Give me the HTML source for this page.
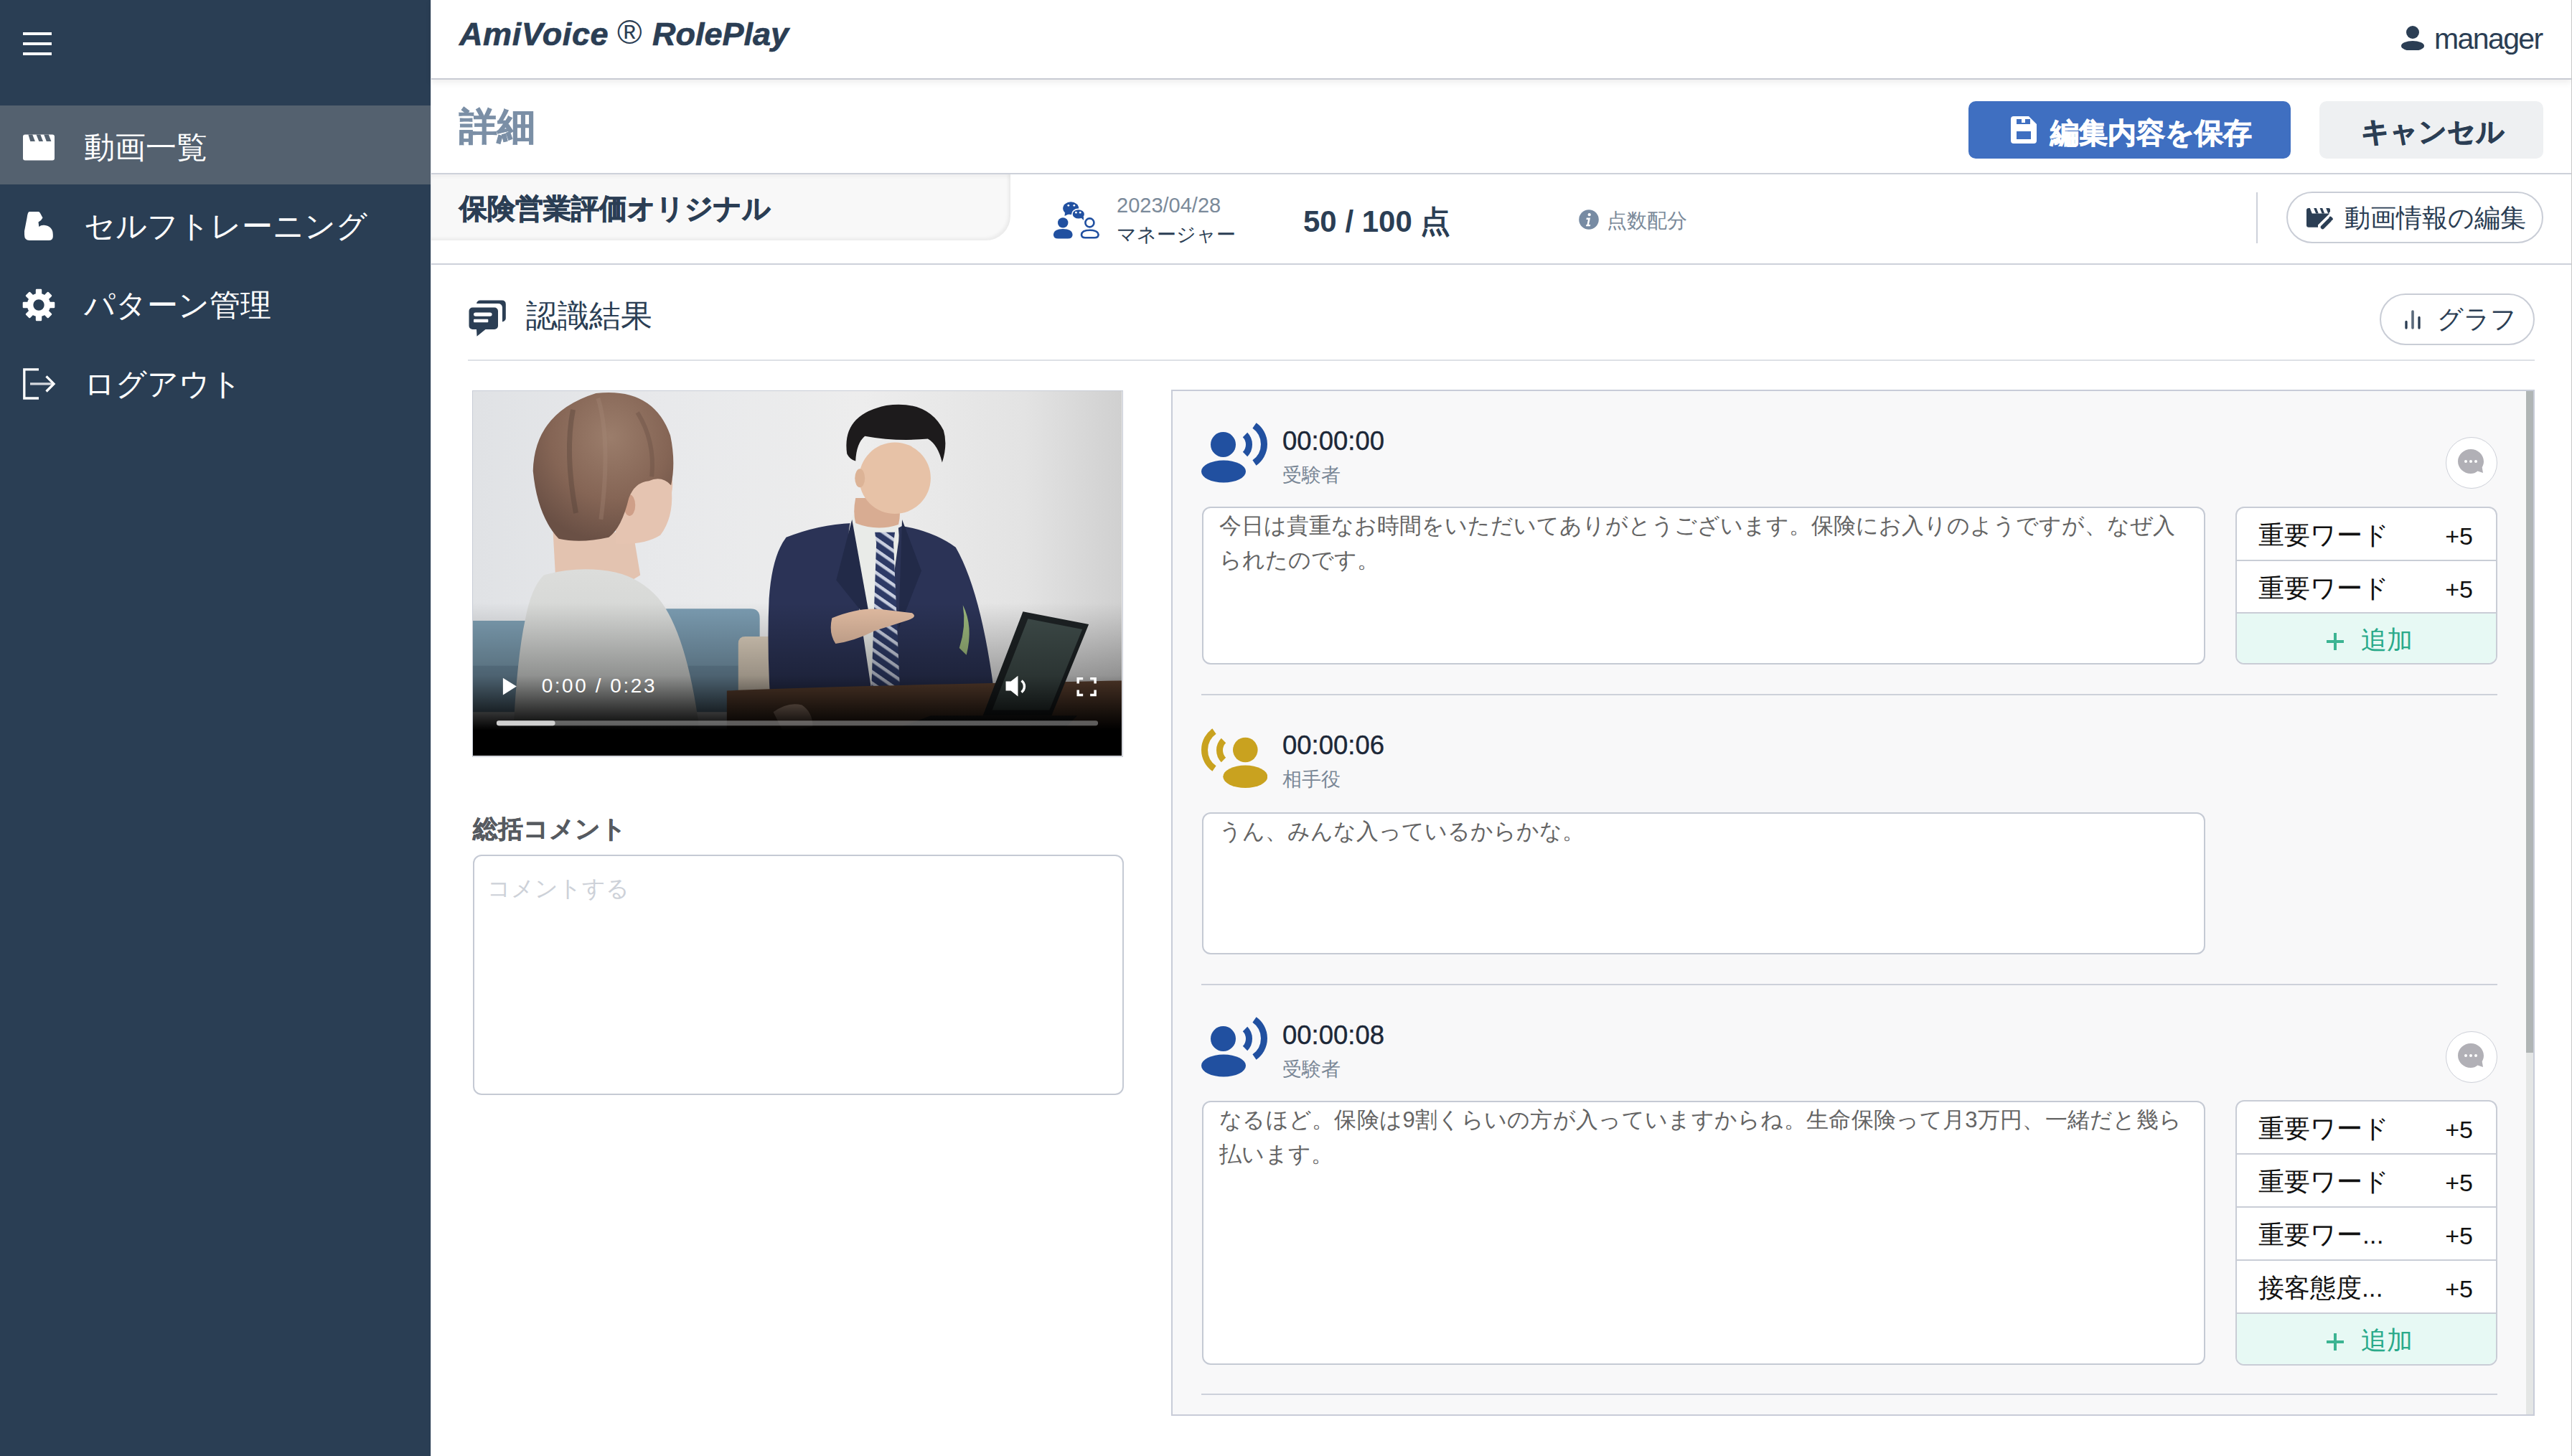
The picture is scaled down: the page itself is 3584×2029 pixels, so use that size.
<!DOCTYPE html>
<html lang="ja">
<head>
<meta charset="utf-8">
<style>
*{box-sizing:border-box;margin:0;padding:0}
html,body{width:3584px;height:2029px;overflow:hidden;background:#fff;font-family:"Liberation Sans",sans-serif;color:#2b3e54}
.a{position:absolute}
.t{position:absolute;white-space:nowrap;line-height:1}
.b{-webkit-text-stroke:0.9px currentColor}
#side{left:0;top:0;width:600px;height:2029px;background:#2a3e54}
.mi{position:absolute;left:0;width:600px;height:110px}
.mi .lbl{position:absolute;left:117px;top:37px;font-size:43px;color:#fff;line-height:1}
.hline{position:absolute;height:2px;background:#cdd1da}
.box{position:absolute;background:#fff;border:2px solid #c5cad4;border-radius:12px}
.kw{position:absolute;background:#fff;border:2px solid #c9cdd6;border-radius:12px;overflow:hidden}
.kw .r{position:relative;height:73.5px;border-bottom:2px solid #c9cdd6}
.kw .r .n{position:absolute;left:30px;top:21px;font-size:35.5px;color:#111;line-height:1}
.kw .r .p{position:absolute;right:32px;top:22px;font-size:34px;color:#111;line-height:1}
.kw3 .r{height:74px}
.kw .add{height:71px;background:#e7f9f4;position:relative}
.kw .add .n{position:absolute;left:125px;top:19px;font-size:36px;color:#2aaa8a;line-height:1}
.ts{position:absolute;font-size:36.5px;color:#1d2838;line-height:1;-webkit-text-stroke:0.4px #1d2838}
.role{position:absolute;font-size:27px;margin-top:2px;color:#7a8796;line-height:1}
.txt{position:absolute;font-size:31px;color:#646464;line-height:48px;white-space:nowrap}
.cbtn{position:absolute;width:72px;height:72px;border-radius:50%;border:1.5px solid #cdd0d8;background:#fff}
</style>
</head>
<body>
<!-- SIDEBAR -->
<div id="side" class="a">
  <!-- hamburger -->
  <div class="a" style="left:32px;top:45px;width:40px;height:4px;background:#fff"></div>
  <div class="a" style="left:32px;top:59px;width:40px;height:4px;background:#fff"></div>
  <div class="a" style="left:32px;top:73px;width:40px;height:4px;background:#fff"></div>

  <div class="mi" style="top:147px;background:#54616f">
    <svg class="a" style="left:32px;top:39.5px" width="44" height="37" viewBox="0 0 44 37"><path fill="#fff" d="M3 0.5h38a3 3 0 0 1 3 3v30a3 3 0 0 1-3 3H3a3 3 0 0 1-3-3v-30a3 3 0 0 1 3-3z"/><g fill="#54616f"><path d="M7.4 0.5h5.8l3.7 9.4h-6.6zM18.5 0.5h5.8l3.7 9.4h-5.7zM29.2 0.5h6.6l3.6 9.4h-6.6z"/></g></svg>
    <div class="lbl">動画一覧</div>
  </div>
  <div class="mi" style="top:257px">
    <svg class="a" style="left:20px;top:28px" width="70" height="60" viewBox="0 0 70 60"><path fill="#fff" d="M21 9.9H33.5Q35 10 36 12L39.5 18.5Q38 22 33.5 24.5L34.3 31Q37 28.5 41.5 28.8Q53.6 30 53.8 42V45Q53.5 50 48 50H21Q14 50 14 42V37L17.5 19Q18.5 10 21 9.9z"/></svg>
    <div class="lbl">セルフトレーニング</div>
  </div>
  <div class="mi" style="top:367px">
    <svg class="a" style="left:20px;top:28px" width="70" height="60" viewBox="0 0 70 60"><g fill="#fff" transform="translate(34 30)"><circle r="16.2"/><rect x="-4.2" y="-22.3" width="8.4" height="44.6" rx="1.2"/><rect x="-4.2" y="-22.3" width="8.4" height="44.6" rx="1.2" transform="rotate(45)"/><rect x="-4.2" y="-22.3" width="8.4" height="44.6" rx="1.2" transform="rotate(90)"/><rect x="-4.2" y="-22.3" width="8.4" height="44.6" rx="1.2" transform="rotate(135)"/><circle r="7.7" fill="#2a3e54"/></g></svg>
    <div class="lbl">パターン管理</div>
  </div>
  <div class="mi" style="top:477px">
    <svg class="a" style="left:20px;top:28px" width="70" height="60" viewBox="0 0 70 60" fill="none" stroke="#fff" stroke-width="3.3"><path d="M34 9.9H13.8V50H34"/><path d="M22 29.9H53.5" stroke="#d5d8de"/><path d="M44.5 19.4L55 29.9L44.5 40.5"/></svg>
    <div class="lbl">ログアウト</div>
  </div>
</div>

<!-- HEADER -->
<div class="a" style="left:600px;top:0;width:2984px;height:111px;background:#fff;border-bottom:2px solid #c8cbd3;box-shadow:0 4px 9px rgba(0,0,0,0.07)"></div>
<div class="t" id="lg1" style="left:640px;top:25px;font-size:45px;letter-spacing:0.6px;-webkit-text-stroke:0.7px #2b3e54;font-weight:bold;font-style:italic;color:#2b3e54">AmiVoice</div>
<div class="t" id="lg2" style="left:860px;top:21px;font-size:47px;color:#2b3e54">®</div>
<div class="t" id="lg3" style="left:909px;top:25px;-webkit-text-stroke:0.7px #2b3e54;font-size:45px;font-weight:bold;font-style:italic;color:#2b3e54">RolePlay</div>
<svg class="a" style="left:3346px;top:36px" width="32" height="34" viewBox="0 0 32 34"><circle cx="16" cy="9" r="9" fill="#2b3e54"/><ellipse cx="16" cy="28" rx="16" ry="7" fill="#2b3e54"/></svg>
<div class="t" style="left:3392px;top:34px;font-size:41px;letter-spacing:-1.6px;color:#2b3e54">manager</div>


<!-- TITLE ROW -->
<div class="t b" style="left:640px;top:149px;font-size:53px;font-weight:bold;color:#7b8fa6">詳細</div>
<div class="a" style="left:2743px;top:141px;width:449px;height:80px;background:#3f6fc1;border-radius:10px"></div>
<svg class="a" style="left:2802px;top:162px" width="36" height="38" viewBox="0 0 36 38"><path fill="#fff" fill-rule="evenodd" d="M4 0h21l11 11v23a4 4 0 0 1-4 4H4a4 4 0 0 1-4-4V4a4 4 0 0 1 4-4zM8 21h20v11H8zM8 4h19v7H8z"/><rect x="15" y="4" width="5" height="5" fill="#fff"/></svg>
<div class="t b" style="left:2857px;top:165px;font-size:40px;font-weight:bold;color:#fff">編集内容を保存</div>
<div class="a" style="left:3232px;top:141px;width:312px;height:80px;background:#eef0f2;border-radius:10px"></div>
<div class="t b" style="left:3290px;top:164px;font-size:39px;font-weight:bold;color:#2b3e54">キャンセル</div>
<div class="hline" style="left:600px;top:241px;width:2984px"></div>

<!-- TAB / INFO ROW -->
<div class="a" style="left:600px;top:243px;width:808px;height:92px;background:#f8f8f8;border-bottom-right-radius:34px;box-shadow:inset -3px -3px 4px rgba(0,0,0,0.05),inset 0 4px 5px rgba(0,0,0,0.035)"></div>
<div class="t b" style="left:640px;top:271px;font-size:39px;font-weight:bold;color:#2b3e54">保険営業評価オリジナル</div>
<svg class="a" style="left:1460px;top:270px" width="80" height="70" viewBox="0 0 80 70"><g fill="#2150a0"><circle cx="21.2" cy="40.4" r="7.2"/><path d="M7.9 57Q8.5 49 21.2 49Q34 49 34.6 57Q34.6 62.5 28 62.5H14.5Q7.9 62.5 7.9 57z"/><ellipse cx="32.2" cy="20.2" rx="11" ry="8.9"/><path d="M24 26L23.5 31L30 28z"/><ellipse cx="42.8" cy="28.4" rx="8.9" ry="7" stroke="#fff" stroke-width="1.6"/><path d="M46 33L50 37L50 32z"/></g><g fill="#fff"><circle cx="28.8" cy="16.3" r="1.4"/><circle cx="36.8" cy="16.3" r="1.4"/><circle cx="39.4" cy="26.2" r="1.4"/><circle cx="45.2" cy="26.2" r="1.4"/></g><g fill="none" stroke="#2150a0" stroke-width="2.6"><circle cx="58.4" cy="40.4" r="6"/><path d="M47 57Q47.5 50.8 58.8 50.8Q70 50.8 70.6 57Q70.6 61.2 65 61.2H52.5Q47 61.2 47 57z"/></g></svg>
<div class="t" style="left:1556px;top:272px;font-size:29px;color:#7b8a9a">2023/04/28</div>
<div class="t" style="left:1556px;top:314px;font-size:27px;color:#2b3e54">マネージャー</div>
<div class="t" style="left:1816px;top:288px;font-size:42px;font-weight:bold;color:#2b3e54">50 / 100 点</div>
<svg class="a" style="left:2200px;top:292px" width="28" height="28" viewBox="0 0 28 28"><circle cx="14" cy="14" r="13.8" fill="#778ba3"/><circle cx="14.7" cy="7.2" r="2.1" fill="#fff"/><path d="M10.8 11.5h5.2l-2 9.5h2.2l-.4 2.3h-5.8l.4-2.3h1.1l1.4-7.1h-2.5z" fill="#fff"/></svg>
<div class="t" style="left:2239px;top:294px;font-size:28px;color:#7b8a9a">点数配分</div>
<div class="a" style="left:3144px;top:268px;width:2px;height:71px;background:#cdd1da"></div>
<div class="a" style="left:3186px;top:267px;width:358px;height:72px;border:2px solid #c9cdd6;border-radius:36px;background:#fff"></div>
<svg class="a" style="left:3205px;top:280px" width="60" height="50" viewBox="0 0 60 50"><g fill="#2b3e54"><path d="M12 10h1.8l3 7.5h24.5L25 33.5v3.2H12a3 3 0 0 1-3-3V13a3 3 0 0 1 3-3z"/><path d="M19.2 10h3.6l3 7.5h-3.6zM27.6 10h3.6l3 7.5h-3.6zM36.2 10h3.8a2 2 0 0 1 2 2v3l-2.5 2.5h-0.3z"/></g><path d="M31.5 36.5L41 27" stroke="#2b3e54" stroke-width="5.5" stroke-linecap="round"/><path d="M42.3 23.6l1.6 1.6" stroke="#2b3e54" stroke-width="4" stroke-linecap="round"/></svg>
<div class="t" style="left:3267px;top:286px;font-size:36px;color:#2b3e54">動画情報の編集</div>
<div class="hline" style="left:600px;top:367px;width:2984px"></div>

<!-- SECTION HEADER -->
<svg class="a" style="left:645px;top:410px" width="70" height="65" viewBox="0 0 70 65"><g fill="#2b3e54"><path d="M13.5 18.5h30.5a5 5 0 0 1 5 5v20.5a5 5 0 0 1-5 5H31.5L19.5 58.8 19 49h-5.5a5 5 0 0 1-5-5V23.5a5 5 0 0 1 5-5z"/><path d="M19 12.3Q20.5 8.5 24 8.5H54.5Q59.8 8.5 59.8 14V33.5Q59.8 37 55 38.6V18.5Q54.5 13 49 13H19.5z"/></g><g fill="#fff"><rect x="15" y="25.4" width="25.6" height="5.4" rx="2.7"/><rect x="15" y="34.8" width="20.3" height="4.5" rx="1"/></g></svg>
<div class="t" style="left:733px;top:419px;font-size:43.5px;color:#2b3e54">認識結果</div>
<div class="a" style="left:3316px;top:409px;width:216px;height:72px;border:2px solid #c9cdd6;border-radius:36px;background:#fff"></div>
<svg class="a" style="left:3350px;top:431px" width="24" height="28" viewBox="0 0 24 28"><g stroke-width="3.3" stroke-linecap="round"><path d="M3 17.5v8.5M21 11.5v14.5" stroke="#2b3e54"/><path d="M12 3v23" stroke="#5a6a7b" stroke-width="3.6"/></g></svg>
<div class="t" style="left:3396px;top:427px;font-size:36px;color:#2b3e54">グラフ</div>
<div class="hline" style="left:652px;top:501px;width:2880px;background:#dde0e6"></div>


<!-- VIDEO -->
<div class="a" style="left:658px;top:543.5px;width:907px;height:511px;border:1.5px solid #c8ccd6;background:#e8e9eb;overflow:hidden">
<svg style="position:absolute;left:0;top:0" width="904" height="508" viewBox="0 0 907 511" preserveAspectRatio="none">
 <defs>
  <linearGradient id="bg" x1="0" x2="1" y1="0" y2="0"><stop offset="0" stop-color="#e0e2e5"/><stop offset="0.3" stop-color="#e8e9eb"/><stop offset="0.6" stop-color="#ededed"/><stop offset="0.85" stop-color="#e3e3e3"/><stop offset="1" stop-color="#d0d0d0"/></linearGradient>
  <linearGradient id="shade" x1="0" x2="0" y1="0" y2="1"><stop offset="0" stop-color="#000" stop-opacity="0"/><stop offset="0.58" stop-color="#000" stop-opacity="0"/><stop offset="0.78" stop-color="#000" stop-opacity="0.3"/><stop offset="0.87" stop-color="#000" stop-opacity="0.72"/><stop offset="0.93" stop-color="#000" stop-opacity="1"/><stop offset="1" stop-color="#000" stop-opacity="1"/></linearGradient>
  <radialGradient id="hair" cx="0.55" cy="0.3" r="0.7"><stop offset="0" stop-color="#9b7d6b"/><stop offset="0.6" stop-color="#856555"/><stop offset="1" stop-color="#6a5045"/></radialGradient>
  <linearGradient id="shirt" x1="0" x2="0" y1="0" y2="1"><stop offset="0" stop-color="#dcdddb"/><stop offset="1" stop-color="#c4c7c5"/></linearGradient>
  <pattern id="tie" width="13" height="13" patternUnits="userSpaceOnUse" patternTransform="rotate(35)"><rect width="13" height="13" fill="#2d3a66"/><rect width="13" height="4.5" fill="#c9cfe0"/></pattern>
 </defs>
 <rect width="907" height="511" fill="url(#bg)"/>
 <!-- sofa -->
 <path d="M0 322h72q10 0 10 10v110H0z" fill="#7d9eb2"/>
 <path d="M259 318q0-13 13-13h116q13 0 13 13v124H259z" fill="#7b9cb1"/>
 <path d="M0 385h402v65H0z" fill="#6e8da2"/>
 <!-- chair -->
 <path d="M371 354q0-10 10-10h33q10 0 10 10v90h-53z" fill="#dccfbd"/>
 <!-- woman neck -->
 <path d="M112 198h112l10 60-20 12h-98z" fill="#e3c3b0"/>
 <!-- woman shirt -->
 <path d="M99 258q50-14 100-4q35 8 60 36q45 55 62 221H55q5-130 18-190q8-45 26-63z" fill="url(#shirt)"/>
 <!-- woman face -->
 <path d="M198 130Q230 100 272 112Q282 120 278 142Q280 178 262 202Q240 216 200 214z" fill="#e5c4b1"/>
 <ellipse cx="219" cy="160" rx="8" ry="15" fill="#cf9f88"/>
 <!-- woman hair -->
 <path d="M84 112Q86 30 172 3Q252-6 276 62Q284 100 277 132Q264 118 246 126Q226 128 218 150Q208 192 190 205Q150 214 120 207Q90 175 84 112z" fill="url(#hair)"/>
 <path d="M140 26q-12 60 4 145" stroke="#4d3b33" stroke-width="7" fill="none" opacity="0.35"/>
 <path d="M175 10q18 60 4 170" stroke="#a98c7b" stroke-width="6" fill="none" opacity="0.3"/>
 <path d="M230 30q25 40 20 90" stroke="#5e473c" stroke-width="6" fill="none" opacity="0.3"/>
 <!-- man suit -->
 <path d="M438 205q45-18 92-20l35 22 35-18q45 8 75 30q40 70 58 240l-8 32H420q-10-110 -6-200q4-60 24-86z" fill="#2b3356"/>
 <!-- shirt V -->
 <path d="M532 172l30 18 30-12q6 20 2 40l-27 200h-10l-30-200q-5-25 5-46z" fill="#e9ebe8"/>
 <!-- tie -->
 <path d="M562 198h28l-2 15 9 207h-40l7-207z" fill="url(#tie)"/>
 <!-- lapels -->
 <path d="M530 180l-22 85 48 60z" fill="#222a48"/>
 <path d="M600 180l27 72-32 82z" fill="#222a48"/>
 <!-- man head -->
 <path d="M535 150q-4 20 0 35q30 12 60 2q4-15 0-37z" fill="#d8ac92"/>
 <ellipse cx="590" cy="122" rx="50" ry="50" fill="#e7c2a7"/>
 <ellipse cx="541" cy="122" rx="7" ry="13" fill="#dcb396"/>
 <path d="M523 88q-8-55 55-68q58-8 80 35q6 20 -2 45q-6-25-20-33q-45 4-88 -4q-12 10-13 35q-8-2-12-10z" fill="#1d1b1c"/>
 <!-- hand -->
 <path d="M502 318q40-16 70-12l42 5q8 5-5 10l-47 15q-30 15-55 18q-10-15-5-36z" fill="#e2bca2"/>
 <!-- plant -->
 <path d="M680 360q10-30 5-60q15 30 5 70z" fill="#9bb77b"/>
 <!-- table -->
 <path d="M355 420q200-8 552-14v105H355z" fill="#6a4a36"/>
 <!-- laptop -->
 <path d="M769 309l92 18-52 128h-96z" fill="#1d2224"/>
 <path d="M776 319l76 15-46 113h-80z" fill="#3e4b49"/>
 <path d="M600 470h230l15-15H640z" fill="#2a2a2a"/>
 <!-- woman hand on table -->
 <path d="M420 450q20-15 40-10q15 10 15 30l-40 10z" fill="#d8b29a"/>
 <rect width="907" height="511" fill="url(#shade)"/>
 <!-- controls -->
 <path d="M42 402l19 12-19 12z" fill="#fff"/>
 <text x="96" y="422" font-family="Liberation Sans" font-size="28" letter-spacing="2.6" fill="#fff">0:00 / 0:23</text>
 <path d="M745 407h7l10-8v29l-10-8h-7z" fill="#fff"/>
 <path d="M767 406a10 10 0 0 1 0 16" stroke="#fff" stroke-width="3.5" fill="none"/>
 <g stroke="#fff" stroke-width="3.5" fill="none"><path d="M846 410v-7h7M863 403h7v7M870 419v7h-7M853 426h-7v-7"/></g>
 <rect x="33" y="462" width="841" height="7" rx="3.5" fill="#fff" fill-opacity="0.35"/>
 <rect x="33" y="462" width="82" height="7" rx="3.5" fill="#d0d0d0"/>
</svg></div>
<!-- COMMENT -->
<div class="t b" style="left:659px;top:1137px;font-size:35px;font-weight:bold;color:#565a60;-webkit-text-stroke:0.5px #565a60">総括コメント</div>
<div class="box" style="left:659px;top:1191px;width:907px;height:335px"></div>
<div class="t" style="left:679px;top:1223px;font-size:31.5px;color:#cdd1d8">コメントする</div>


<!-- PANEL -->
<div class="a" style="left:1632px;top:543px;width:1900px;height:1430px;background:#f8f8f9;border:2px solid #c8ccd8;border-right:none"></div>
<div class="a" style="left:3520px;top:545px;width:11px;height:922px;background:#b0b5b5"></div>
<div class="a" style="left:3520px;top:1467px;width:11px;height:504px;background:#e4e6e5"></div>
<div class="a" style="left:3530px;top:543px;width:2px;height:1430px;background:#c8ccd8"></div>
<svg class="a" style="left:1674px;top:589px" width="92" height="84" viewBox="0 0 92 84"><g fill="#2150a0"><circle cx="30.5" cy="30.5" r="17.5"/><ellipse cx="31" cy="68" rx="31" ry="15.5"/></g><g fill="none" stroke="#2150a0" stroke-width="9"><path d="M61 17A19.3 19.3 0 0 1 61 44"/><path d="M74 4A31.8 31.8 0 0 1 74 56"/></g></svg><div class="ts" style="left:1787px;top:597px">00:00:00</div><div class="role" style="left:1787px;top:647px">受験者</div><div class="cbtn" style="left:3408px;top:609px"><svg class="a" style="left:16px;top:16px" width="36" height="35" viewBox="0 0 36 35"><path d="M18 0C27.9 0 36 7.6 36 17c0 3-.8 5.8-2.3 8.2L35 33l-7.5-2.6C24.8 32.7 21.5 34 18 34 8.1 34 0 26.4 0 17S8.1 0 18 0z" fill="#b1b0b6"/><g fill="#fff"><circle cx="11" cy="17" r="2"/><circle cx="18" cy="17" r="2"/><circle cx="25" cy="17" r="2"/></g></svg></div><div class="box" style="left:1675px;top:706px;width:1398px;height:220px"></div><div class="txt" style="left:1699px;top:709px;width:1350px">今日は貴重なお時間をいただいてありがとうございます。保険にお入りのようですが、なぜ入<br>られたのです。</div><div class="kw" style="left:3115px;top:706px;width:365px;height:220px"><div class="r"><div class="n">重要ワード</div><div class="p">+5</div></div><div class="r"><div class="n">重要ワード</div><div class="p">+5</div></div><div class="add"><div class="n"><span style="display:inline-block;width:24px;height:24px;position:relative;top:2px;margin-right:24px"><i style="position:absolute;left:0;top:10px;width:24px;height:4px;background:#3cb492"></i><i style="position:absolute;left:10px;top:0;width:4px;height:24px;background:#3cb492"></i></span>追加</div></div></div><div class="hline" style="left:1674px;top:967px;width:1806px"></div><svg class="a" style="left:1674px;top:1015px" width="92" height="84" viewBox="0 0 92 84"><g fill="#c9a21f"><circle cx="61.3" cy="30" r="17.3"/><ellipse cx="61.3" cy="67.3" rx="31" ry="15.7"/></g><g fill="none" stroke="#c9a21f" stroke-width="9"><path d="M31 17A19.3 19.3 0 0 0 31 44"/><path d="M18 4A31.8 31.8 0 0 0 18 56"/></g></svg><div class="ts" style="left:1787px;top:1021px">00:00:06</div><div class="role" style="left:1787px;top:1071px">相手役</div><div class="box" style="left:1675px;top:1132px;width:1398px;height:198px"></div><div class="txt" style="left:1699px;top:1135px;width:1350px">うん、みんな入っているからかな。</div><div class="hline" style="left:1674px;top:1371px;width:1806px"></div><svg class="a" style="left:1674px;top:1417px" width="92" height="84" viewBox="0 0 92 84"><g fill="#2150a0"><circle cx="30.5" cy="30.5" r="17.5"/><ellipse cx="31" cy="68" rx="31" ry="15.5"/></g><g fill="none" stroke="#2150a0" stroke-width="9"><path d="M61 17A19.3 19.3 0 0 1 61 44"/><path d="M74 4A31.8 31.8 0 0 1 74 56"/></g></svg><div class="ts" style="left:1787px;top:1425px">00:00:08</div><div class="role" style="left:1787px;top:1475px">受験者</div><div class="cbtn" style="left:3408px;top:1437px"><svg class="a" style="left:16px;top:16px" width="36" height="35" viewBox="0 0 36 35"><path d="M18 0C27.9 0 36 7.6 36 17c0 3-.8 5.8-2.3 8.2L35 33l-7.5-2.6C24.8 32.7 21.5 34 18 34 8.1 34 0 26.4 0 17S8.1 0 18 0z" fill="#b1b0b6"/><g fill="#fff"><circle cx="11" cy="17" r="2"/><circle cx="18" cy="17" r="2"/><circle cx="25" cy="17" r="2"/></g></svg></div><div class="box" style="left:1675px;top:1534px;width:1398px;height:368px"></div><div class="txt" style="left:1699px;top:1537px;width:1350px;letter-spacing:0.3px">なるほど。保険は9割くらいの方が入っていますからね。生命保険って月3万円、一緒だと幾ら<br>払います。</div><div class="kw kw3" style="left:3115px;top:1533px;width:365px;height:370px"><div class="r"><div class="n">重要ワード</div><div class="p">+5</div></div><div class="r"><div class="n">重要ワード</div><div class="p">+5</div></div><div class="r"><div class="n">重要ワー...</div><div class="p">+5</div></div><div class="r"><div class="n">接客態度...</div><div class="p">+5</div></div><div class="add"><div class="n"><span style="display:inline-block;width:24px;height:24px;position:relative;top:2px;margin-right:24px"><i style="position:absolute;left:0;top:10px;width:24px;height:4px;background:#3cb492"></i><i style="position:absolute;left:10px;top:0;width:4px;height:24px;background:#3cb492"></i></span>追加</div></div></div><div class="hline" style="left:1674px;top:1942px;width:1806px"></div>

<div class="a" style="left:600px;top:0;width:1px;height:2029px;background:#e3e5e9"></div>
<!-- page right border & left border -->
<div class="a" style="left:3583px;top:0;width:1px;height:2029px;background:#c9c9c9"></div>

</body>
</html>
